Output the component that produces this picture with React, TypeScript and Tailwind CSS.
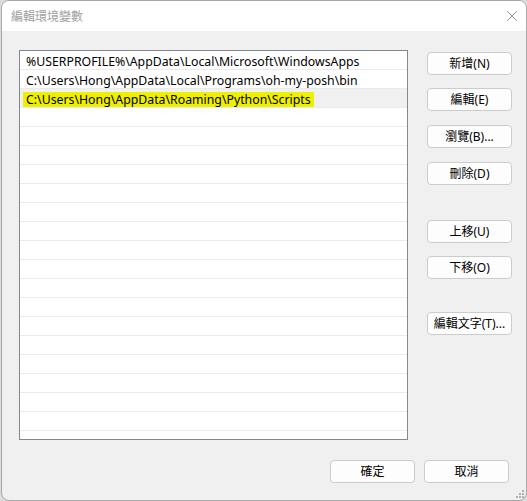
import React from "react";

const paths = [
  "%USERPROFILE%\\AppData\\Local\\Microsoft\\WindowsApps",
  "C:\\Users\\Hong\\AppData\\Local\\Programs\\oh-my-posh\\bin",
  "C:\\Users\\Hong\\AppData\\Roaming\\Python\\Scripts",
];

const sideButtons = [
  { label: "新增(N)", top: "mt-0" },
  { label: "編輯(E)", top: "mt-[13px]" },
  { label: "瀏覽(B)...", top: "mt-[14px]" },
  { label: "刪除(D)", top: "mt-[14px]" },
  { label: "上移(U)", top: "mt-[35px]" },
  { label: "下移(O)", top: "mt-[13px]" },
  { label: "編輯文字(T)...", top: "mt-[33px]" },
];

const font = "font-['Segoe_UI','Noto_Sans','Noto_Sans_CJK_TC',sans-serif]";

function Button({ label, className = "" }: { label: string; className?: string }) {
  return (
    <div
      className={`flex h-[23px] w-[85px] shrink-0 items-center justify-center rounded-[4px] border border-[#cccccc] bg-[#fdfdfd] text-[12px] text-black ${className}`}
    >
      {label}
    </div>
  );
}

export default function App() {
  const rows = Array.from({ length: 21 }, (_, i) => paths[i] ?? "");
  return (
    <div className={`h-[501px] w-[527px] overflow-hidden bg-[#dcdcdc] ${font}`}>
      <div className="relative ml-px flex h-[501px] w-[526px] flex-col overflow-hidden rounded-[8px] border border-[#a8a8a8] bg-[#f0f0f0]">
        {/* title bar */}
        <div className="flex h-[30px] items-center justify-between bg-white pl-[9px] pr-[8px]">
          <span className="text-[12px] text-[#a0a0a0] font-['Noto_Sans_CJK_TC',sans-serif]">編輯環境變數</span>
          <svg width="12" height="12" viewBox="0 0 12 12">
            <path d="M1 1 L11 11 M11 1 L1 11" stroke="#9a9a9a" strokeWidth="1" />
          </svg>
        </div>

        {/* body */}
        <div className="flex flex-1 flex-col pl-[17px] pt-[19px]">
          <div className="flex">
            <div className="h-[390px] w-[389px] shrink-0 overflow-hidden border border-[#828790] bg-white">
              {rows.map((p, i) => (
                <div
                  key={i}
                  className={`flex h-[19px] shrink-0 items-center border-b border-[#ebebeb] pl-[3px] pt-[2px] text-[12.3px] text-black ${
                    i === 2 ? "bg-[#f0f0f0]" : ""
                  }`}
                >
                  {p && (
                    <span className={`px-[3px] leading-[15px] ${i === 2 ? "bg-[#eef000]" : ""}`}>{p}</span>
                  )}
                </div>
              ))}
            </div>
            <div className="ml-[19px] mt-[2px] flex flex-col">
              {sideButtons.map((b) => (
                <Button key={b.label} label={b.label} className={b.top} />
              ))}
            </div>
          </div>
          <div className="mt-[20px] flex justify-end gap-[9px] pr-[17px]">
            <Button label="確定" />
            <Button label="取消" />
          </div>
        </div>

        {/* resize grip */}
        <div className="absolute bottom-[2px] right-[2px] grid grid-cols-3 gap-px">
          <span className="h-[2px] w-[2px]" />
          <span className="h-[2px] w-[2px]" />
          <span className="h-[2px] w-[2px] bg-[#b0b0b0]" />
          <span className="h-[2px] w-[2px]" />
          <span className="h-[2px] w-[2px] bg-[#b0b0b0]" />
          <span className="h-[2px] w-[2px] bg-[#b0b0b0]" />
          <span className="h-[2px] w-[2px] bg-[#b0b0b0]" />
          <span className="h-[2px] w-[2px] bg-[#b0b0b0]" />
          <span className="h-[2px] w-[2px] bg-[#b0b0b0]" />
        </div>
      </div>
    </div>
  );
}
